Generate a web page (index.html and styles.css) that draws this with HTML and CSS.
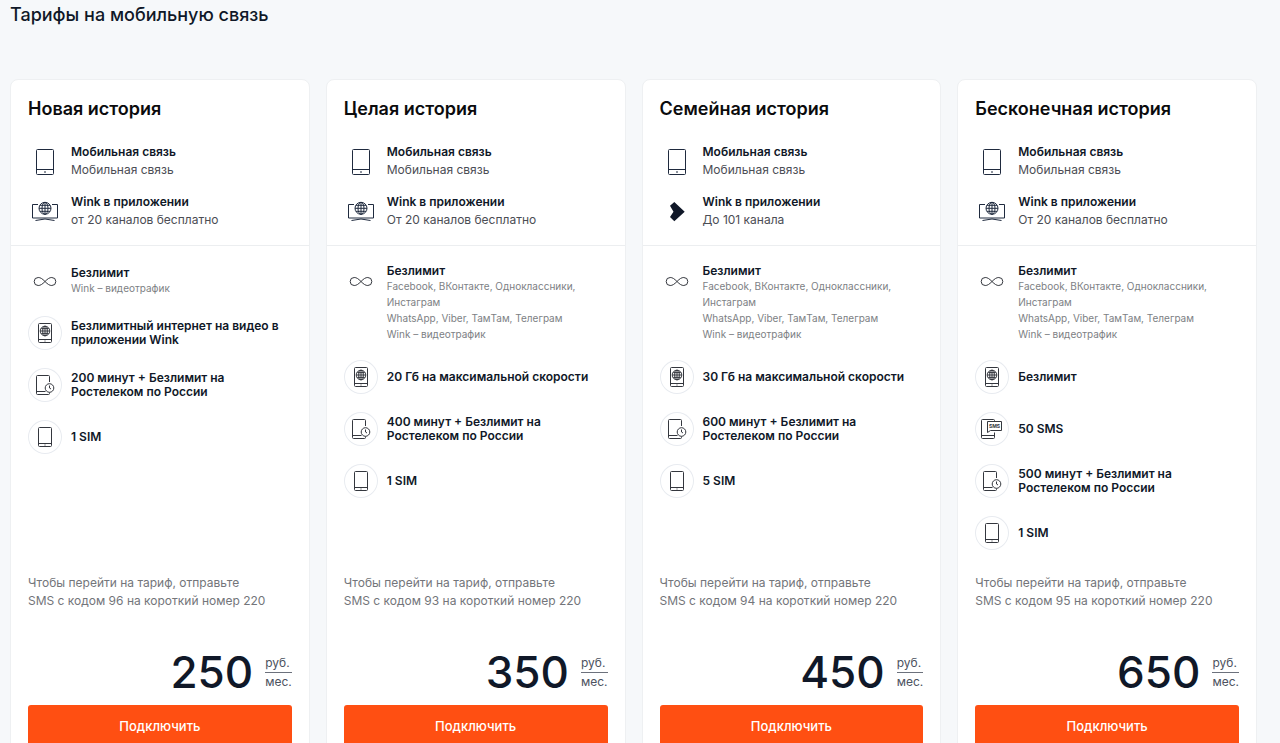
FILE: index.html
```html
<!DOCTYPE html>
<html lang="ru">
<head>
<meta charset="utf-8">
<meta name="viewport" content="width=device-width, initial-scale=1">
<title>Тарифы на мобильную связь</title>
<link rel="stylesheet" href="styles.css">
</head>
<body>
<svg class="sprite" aria-hidden="true">
  <symbol id="phone-large" viewBox="0 0 34 34"><rect x="8.500" y="5.500" width="17" height="25" rx="1"/><path d="M8.500 25.500h17M16 28h2"/></symbol>
  <symbol id="tv" viewBox="0 0 34 34"><path d="M10 10.500H4.500v13.500h25V10.500H24M7.500 26.500q9.500-3 19 0"/><circle cx="17" cy="14.300" r="6"/><path d="M17 8.300v12M11 14.300h12M12 11.300h10M12 17.300h10"/><ellipse cx="17" cy="14.300" rx="3" ry="6"/></symbol>
  <symbol id="wink" viewBox="0 0 34 34"><path class="solid" d="M14.300 8 24.700 17.700 14.300 27.300 10 23l3.500-5.300L10 11.700z"/></symbol>
  <symbol id="infinity" viewBox="0 0 34 34"><path d="M17 17.500c-2.800-2.800-4.500-4-6.800-4a4 4 0 0 0 0 8c2.300 0 4-1.200 6.800-4s4.500-4 6.800-4a4 4 0 0 1 0 8c-2.300 0-4-1.200-6.800-4z"/></symbol>
  <symbol id="phone-web" viewBox="0 0 34 34"><rect x="10.500" y="7.500" width="13" height="19" rx="1"/><path d="M10.500 23.500h13M16.500 25h1"/><circle cx="17" cy="15" r="4.800"/><path d="M17 10.200v9.600M12.200 15h9.600M13.300 12.600h7.400M13.300 17.400h7.400"/><ellipse cx="17" cy="15" rx="2.300" ry="4.800"/></symbol>
  <symbol id="phone-clock" viewBox="0 0 34 34"><path d="M21.500 14V8.500a1 1 0 0 0-1-1h-11a1 1 0 0 0-1 1v17a1 1 0 0 0 1 1h11a1 1 0 0 0 1-1v-1M8.500 23.500h9"/><circle cx="21.500" cy="20" r="4.300"/><path d="M21.500 17.500V20l1.500 1"/></symbol>
  <symbol id="phone" viewBox="0 0 34 34"><rect x="10.500" y="7.500" width="13" height="19" rx="1"/><path d="M10.500 23.500h13M16.500 25h1"/></symbol>
  <symbol id="phone-sms" viewBox="0 0 34 34"><path d="M19.500 9.500v-1a1 1 0 0 0-1-1h-11a1 1 0 0 0-1 1v17a1 1 0 0 0 1 1h11a1 1 0 0 0 1-1v-5M6.500 23.500h13M12.500 20.500v-11h14v9h-11z"/><text x="19.500" y="16" text-anchor="middle">SMS</text></symbol>
</svg>
<main class="page">
  <h1 class="page-title">Тарифы на мобильную связь</h1>
  <div class="plans">
    <article class="plan">
      <header class="plan-head">
        <h2 class="plan-name">Новая история</h2>
        <ul class="services">
          <li class="service"><svg class="icon dark"><use href="#phone-large"/></svg><div><h3 class="label">Мобильная связь</h3><p class="detail">Мобильная связь</p></div></li>
          <li class="service"><svg class="icon dark"><use href="#tv"/></svg><div><h3 class="label">Wink в приложении</h3><p class="detail">от 20 каналов бесплатно</p></div></li>
        </ul>
      </header>
      <ul class="features">
        <li class="feature"><svg class="icon"><use href="#infinity"/></svg><div class="text"><h3 class="feature-name">Безлимит</h3><p class="note">Wink – видеотрафик</p></div></li>
        <li class="feature"><svg class="icon ring"><use href="#phone-web"/></svg><h3 class="text feature-name">Безлимитный интернет на видео в приложении Wink</h3></li>
        <li class="feature"><svg class="icon ring"><use href="#phone-clock"/></svg><h3 class="text feature-name">200 минут + Безлимит на<br>Ростелеком по России</h3></li>
        <li class="feature"><svg class="icon ring"><use href="#phone"/></svg><h3 class="text feature-name">1 SIM</h3></li>
      </ul>
      <footer class="plan-foot">
        <p class="hint">Чтобы перейти на тариф, отправьте<br>SMS с кодом 96 на короткий номер 220</p>
        <div class="price"><span class="amount">250</span><span class="unit"><span class="currency">руб.</span><span>мес.</span></span></div>
        <button class="connect" type="button">Подключить</button>
      </footer>
    </article>
    <article class="plan">
      <header class="plan-head">
        <h2 class="plan-name">Целая история</h2>
        <ul class="services">
          <li class="service"><svg class="icon dark"><use href="#phone-large"/></svg><div><h3 class="label">Мобильная связь</h3><p class="detail">Мобильная связь</p></div></li>
          <li class="service"><svg class="icon dark"><use href="#tv"/></svg><div><h3 class="label">Wink в приложении</h3><p class="detail">От 20 каналов бесплатно</p></div></li>
        </ul>
      </header>
      <ul class="features">
        <li class="feature"><svg class="icon"><use href="#infinity"/></svg><div class="text"><h3 class="feature-name">Безлимит</h3><p class="note">Facebook, ВКонтакте, Одноклассники, Инстаграм<br>WhatsApp, Viber, ТамТам, Телеграм<br>Wink – видеотрафик</p></div></li>
        <li class="feature"><svg class="icon ring"><use href="#phone-web"/></svg><h3 class="text feature-name">20 Гб на максимальной скорости</h3></li>
        <li class="feature"><svg class="icon ring"><use href="#phone-clock"/></svg><h3 class="text feature-name">400 минут + Безлимит на<br>Ростелеком по России</h3></li>
        <li class="feature"><svg class="icon ring"><use href="#phone"/></svg><h3 class="text feature-name">1 SIM</h3></li>
      </ul>
      <footer class="plan-foot">
        <p class="hint">Чтобы перейти на тариф, отправьте<br>SMS с кодом 93 на короткий номер 220</p>
        <div class="price"><span class="amount">350</span><span class="unit"><span class="currency">руб.</span><span>мес.</span></span></div>
        <button class="connect" type="button">Подключить</button>
      </footer>
    </article>
    <article class="plan">
      <header class="plan-head">
        <h2 class="plan-name">Семейная история</h2>
        <ul class="services">
          <li class="service"><svg class="icon dark"><use href="#phone-large"/></svg><div><h3 class="label">Мобильная связь</h3><p class="detail">Мобильная связь</p></div></li>
          <li class="service"><svg class="icon dark"><use href="#wink"/></svg><div><h3 class="label">Wink в приложении</h3><p class="detail">До 101 канала</p></div></li>
        </ul>
      </header>
      <ul class="features">
        <li class="feature"><svg class="icon"><use href="#infinity"/></svg><div class="text"><h3 class="feature-name">Безлимит</h3><p class="note">Facebook, ВКонтакте, Одноклассники, Инстаграм<br>WhatsApp, Viber, ТамТам, Телеграм<br>Wink – видеотрафик</p></div></li>
        <li class="feature"><svg class="icon ring"><use href="#phone-web"/></svg><h3 class="text feature-name">30 Гб на максимальной скорости</h3></li>
        <li class="feature"><svg class="icon ring"><use href="#phone-clock"/></svg><h3 class="text feature-name">600 минут + Безлимит на<br>Ростелеком по России</h3></li>
        <li class="feature"><svg class="icon ring"><use href="#phone"/></svg><h3 class="text feature-name">5 SIM</h3></li>
      </ul>
      <footer class="plan-foot">
        <p class="hint">Чтобы перейти на тариф, отправьте<br>SMS с кодом 94 на короткий номер 220</p>
        <div class="price"><span class="amount">450</span><span class="unit"><span class="currency">руб.</span><span>мес.</span></span></div>
        <button class="connect" type="button">Подключить</button>
      </footer>
    </article>
    <article class="plan">
      <header class="plan-head">
        <h2 class="plan-name">Бесконечная история</h2>
        <ul class="services">
          <li class="service"><svg class="icon dark"><use href="#phone-large"/></svg><div><h3 class="label">Мобильная связь</h3><p class="detail">Мобильная связь</p></div></li>
          <li class="service"><svg class="icon dark"><use href="#tv"/></svg><div><h3 class="label">Wink в приложении</h3><p class="detail">От 20 каналов бесплатно</p></div></li>
        </ul>
      </header>
      <ul class="features">
        <li class="feature"><svg class="icon"><use href="#infinity"/></svg><div class="text"><h3 class="feature-name">Безлимит</h3><p class="note">Facebook, ВКонтакте, Одноклассники, Инстаграм<br>WhatsApp, Viber, ТамТам, Телеграм<br>Wink – видеотрафик</p></div></li>
        <li class="feature"><svg class="icon ring"><use href="#phone-web"/></svg><h3 class="text feature-name">Безлимит</h3></li>
        <li class="feature"><svg class="icon ring"><use href="#phone-sms"/></svg><h3 class="text feature-name">50 SMS</h3></li>
        <li class="feature"><svg class="icon ring"><use href="#phone-clock"/></svg><h3 class="text feature-name">500 минут + Безлимит на<br>Ростелеком по России</h3></li>
        <li class="feature"><svg class="icon ring"><use href="#phone"/></svg><h3 class="text feature-name">1 SIM</h3></li>
      </ul>
      <footer class="plan-foot">
        <p class="hint">Чтобы перейти на тариф, отправьте<br>SMS с кодом 95 на короткий номер 220</p>
        <div class="price"><span class="amount">650</span><span class="unit"><span class="currency">руб.</span><span>мес.</span></span></div>
        <button class="connect" type="button">Подключить</button>
      </footer>
    </article>
  </div>
</main>
</body>
</html>
```
FILE: styles.css
```css
* { box-sizing: border-box; }
body {
  margin: 0;
  background: #f6f8fa;
  color: #101828;
  font-family: Inter, "Liberation Sans", sans-serif;
  font-size: 12px;
}
h1, h2, h3, p, ul { margin: 0; padding: 0; }
ul { list-style: none; }
.sprite { display: none; }
.page { padding: 3px 23px 24px 10px; }
.page-title { font-size: 18px; line-height: 24px; font-weight: 500; margin-bottom: 52px; }
.plans {
  display: grid;
  grid-template-columns: repeat(4, minmax(0, 1fr));
  gap: 16px;
}
.plan {
  display: flex;
  flex-direction: column;
  background: #fff;
  border: 1px solid #eef0f2;
  border-radius: 8px;
}
.plan-head { padding: 17px 17px 16px; border-bottom: 1px solid #eceef0; }
.plan-name { font-size: 18px; line-height: 24px; font-weight: 600; color: #0b0b0d; margin-bottom: 22px; }
.services { display: grid; gap: 14px; }
.service { display: flex; align-items: center; gap: 9px; }
.label { font-size: 12px; line-height: 18px; font-weight: 600; }
.detail { font-size: 12px; line-height: 18px; color: #4b4d54; }
.icon {
  flex: none;
  width: 34px;
  height: 34px;
  fill: none;
  stroke: #34373e;
  stroke-width: 1;
}
.dark { stroke: #1f2a3e; }
.solid { fill: #101828; stroke: none; }
#phone-sms text { font-size: 5px; font-weight: 700; fill: #34373e; stroke: none; }
.ring { border-radius: 50%; box-shadow: inset 0 0 0 1px #e8ebf0; }
.features { display: grid; align-content: start; gap: 18px; flex: 1; padding: 18px 17px 24px; }
.feature { display: flex; gap: 9px; }
.text { align-self: center; }
.feature-name { font-size: 12px; line-height: 14px; font-weight: 600; }
.note { font-size: 10px; line-height: 16px; color: #7d7f84; }
.plan-foot { padding: 0 17px 18px; }
.hint { font-size: 12px; line-height: 18px; color: #73757a; }
.price { display: flex; justify-content: flex-end; align-items: center; gap: 12px; margin: 37px 0 8px; }
.amount { font-size: 44px; line-height: 50px; font-weight: 500; }
.unit { display: flex; flex-direction: column; font-size: 12px; line-height: 18px; color: #4c5260; }
.currency { border-bottom: 1px solid #6c717c; }
.connect {
  width: 100%;
  height: 42px;
  border: 0;
  border-radius: 3px;
  background: #ff4f12;
  color: #fff;
  font: 500 13px/20px Inter, "Liberation Sans", sans-serif;
}
```
